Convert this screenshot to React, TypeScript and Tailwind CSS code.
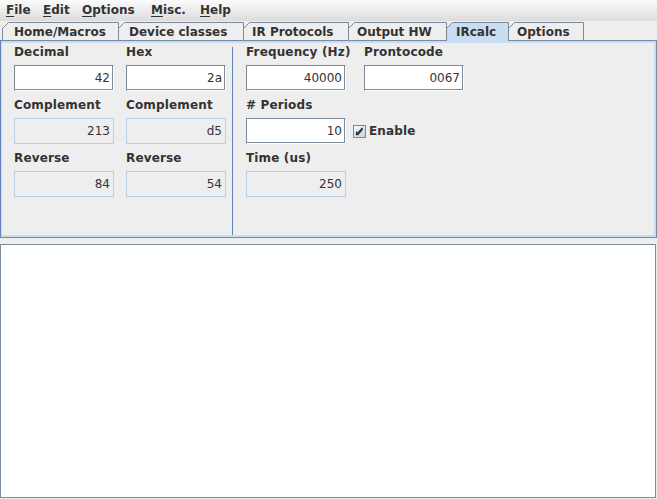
import React from 'react';

type TabDef = { label: string; width: number; pl: number; selected?: boolean };

const TABS: TabDef[] = [
  { label: 'Home/Macros', width: 117, pl: 12 },
  { label: 'Device classes', width: 126, pl: 11 },
  { label: 'IR Protocols', width: 106, pl: 9 },
  { label: 'Output HW', width: 99, pl: 9 },
  { label: 'IRcalc', width: 63, pl: 10, selected: true },
  { label: 'Options', width: 76, pl: 9 },
];

// menu item widths measured off the menubar (text starts 6px in)
const MENUS: [string, number][] = [
  ['File', 37],
  ['Edit', 39],
  ['Options', 69],
  ['Misc.', 49],
  ['Help', 45],
];

function Tab({ t }: { t: TabDef }) {
  const h = t.selected ? 19 : 18;
  return (
    <div
      className={`relative -mr-[1px] font-bold leading-[14px] ${t.selected ? 'z-10 h-[19px] -mb-[1px]' : 'h-[18px]'}`}
      style={{ width: t.width }}
    >
      <svg className="absolute inset-0" width={t.width} height={h}>
        <path
          d={`M0.5 ${h} V6.5 L6.5 0.5 H${t.width - 0.5} V${h}`}
          fill={t.selected ? '#c8ddf2' : '#eeeeee'}
          stroke="#7a8a99"
          strokeWidth="1"
        />
      </svg>
      <div className="relative pt-[3px]" style={{ paddingLeft: t.pl }}>
        {t.label}
      </div>
    </div>
  );
}

function Field({ value, editable = false }: { value: string; editable?: boolean }) {
  const cls = editable
    ? 'bg-white border border-t-[#7a8a99] border-l-[#7a8a99] border-r-white border-b-white shadow-[inset_-1px_-1px_0_#7a8a99]'
    : 'bg-[#eeeeee] border border-[#b8cfe5]';
  return (
    <div className={`w-[100px] h-[26px] flex items-center justify-end pr-[3px] ${cls}`}>
      <span className="leading-[14px]">{value}</span>
    </div>
  );
}

function Label({ children }: { children: React.ReactNode }) {
  return <div className="h-[14px] leading-[14px] font-bold whitespace-nowrap tracking-[0.15px]">{children}</div>;
}

function Group({ label, children, first }: { label: string; children: React.ReactNode; first?: boolean }) {
  return (
    <div className={first ? '' : 'mt-[7px]'}>
      <Label>{label}</Label>
      <div className="mt-[6px]">{children}</div>
    </div>
  );
}

function CheckBox() {
  return (
    <svg width="13" height="13" viewBox="0 0 13 13">
      <defs>
        <linearGradient id="cb" x1="0" y1="0" x2="1" y2="1">
          <stop offset="0" stopColor="#ffffff" />
          <stop offset="1" stopColor="#b8cfe5" />
        </linearGradient>
      </defs>
      <rect x="0.5" y="0.5" width="12" height="12" fill="url(#cb)" stroke="#7a8a99" />
      <path d="M3.5 6.5 V9.5 H5 L9.5 4 M4.5 8.5 L9.5 3" stroke="#333333" strokeWidth="1.4" fill="none" />
    </svg>
  );
}

export default function App() {
  return (
    <div className="w-[657px] h-[499px] overflow-hidden bg-[#eeeeee] text-[#333333] text-[12px] font-['DejaVu_Sans',sans-serif]">
      {/* menu bar */}
      <div className="h-[21px] flex bg-[linear-gradient(to_bottom,#fbfbfb,#dcdcdc)] pt-[3px]">
        {MENUS.map(([m, w]) => (
          <div key={m} className="pl-[6px] font-bold leading-[14px] whitespace-nowrap" style={{ width: w }}>
            <span className="underline underline-offset-[2px] decoration-1">{m[0]}</span>
            {m.slice(1)}
          </div>
        ))}
      </div>

      {/* tabs */}
      <div className="mt-[1px] flex items-end pl-[2px] h-[18px]">
        {TABS.map(t => (
          <Tab key={t.label} t={t} />
        ))}
      </div>

      {/* tab content */}
      <div className="w-[657px] h-[198px] border border-[#7a8a99] border-l-[#6382bf]">
        <div className="h-full border-2 border-l border-[#c8ddf2] flex">
          <div className="w-[230px] pl-[12px] pt-[2px]">
            <div className="flex gap-[12px]">
              <div>
                <Group label="Decimal" first>
                  <Field value="42" editable />
                </Group>
                <Group label="Complement">
                  <Field value="213" />
                </Group>
                <Group label="Reverse">
                  <Field value="84" />
                </Group>
              </div>
              <div>
                <Group label="Hex" first>
                  <Field value="2a" editable />
                </Group>
                <Group label="Complement">
                  <Field value="d5" />
                </Group>
                <Group label="Reverse">
                  <Field value="54" />
                </Group>
              </div>
            </div>
          </div>
          <div className="w-[1px] mt-[4px] bg-[#6382bf]" />
          <div className="pl-[13px] pt-[2px]">
            <div className="flex">
              <div className="w-[118px]">
                <Group label="Frequency (Hz)" first>
                  <Field value="40000" editable />
                </Group>
              </div>
              <Group label="Prontocode" first>
                <Field value="0067" editable />
              </Group>
            </div>
            <Group label="# Periods">
              <div className="flex items-center">
                <Field value="10" editable />
                <div className="ml-[7px] flex items-center gap-[3px]">
                  <CheckBox />
                  <span className="font-bold leading-[14px] tracking-[0.15px]">Enable</span>
                </div>
              </div>
            </Group>
            <Group label="Time (us)">
              <Field value="250" />
            </Group>
          </div>
        </div>
      </div>

      {/* output area */}
      <div className="mt-[6px] w-[656px] h-[254px] bg-white border border-[#7a8a99]" />
    </div>
  );
}
